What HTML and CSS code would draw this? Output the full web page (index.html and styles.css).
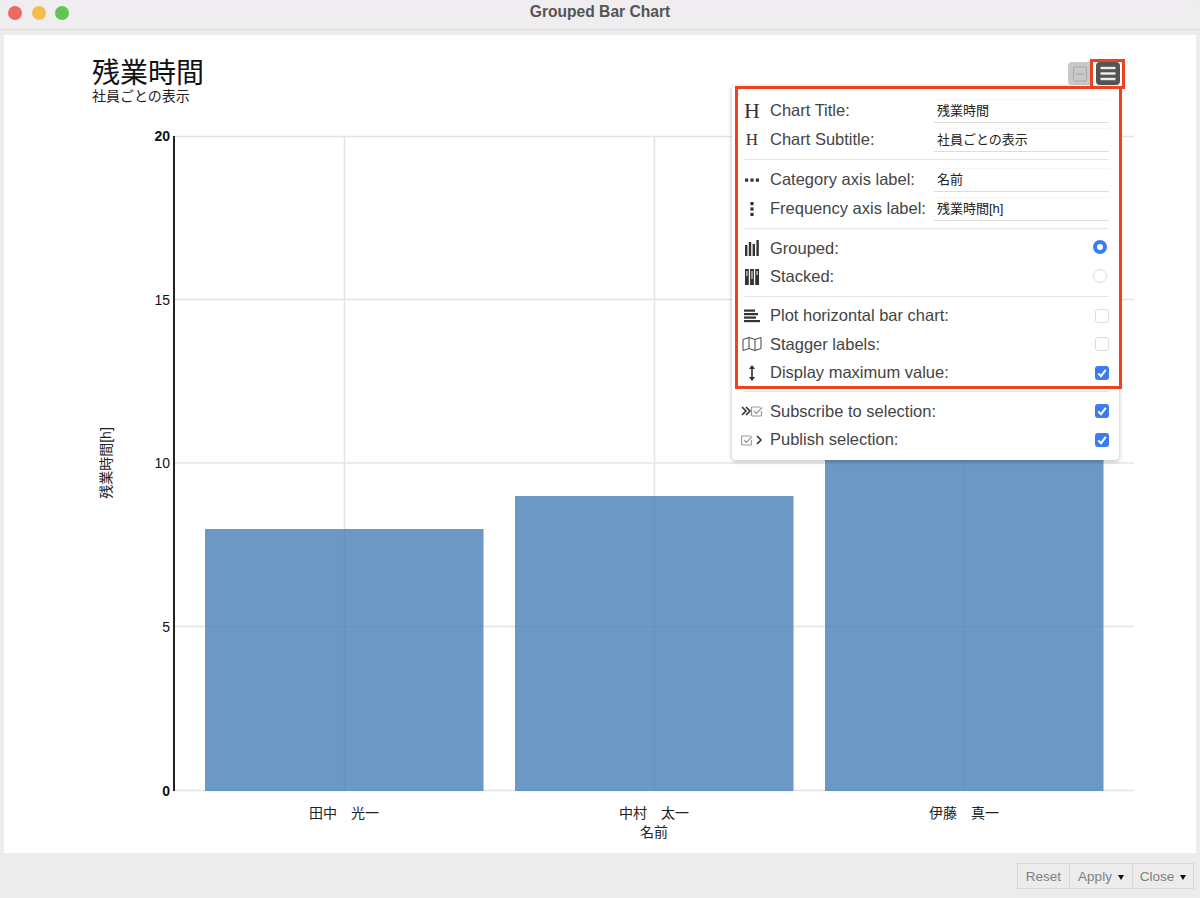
FILE: index.html
```html
<!DOCTYPE html>
<html lang="ja">
<head>
  <meta charset="UTF-8" />
  <meta name="viewport" content="width=device-width, initial-scale=1.0"/>
  <title>Grouped Bar Chart</title>
  <link rel="stylesheet" href="styles.css">
</head>
<body>
  <div class="window">
    <div class="titlebar">
      <div class="lights">
        <span class="light light-red"></span>
        <span class="light light-yellow"></span>
        <span class="light light-green"></span>
      </div>
      <span class="window-title">Grouped Bar Chart</span>
    </div>

    <div class="main">
      <div class="chart-head">
        <div class="chart-title">残業時間</div>
        <div class="chart-subtitle">社員ごとの表示</div>
      </div>

      <!-- viewBox uses page coordinates -->
      <svg class="plot" viewBox="4 105 1192 748" width="1192" height="748">
        <g class="grid">
          <line x1="174" x2="1134" y1="136.5" y2="136.5"/>
          <line x1="174" x2="1134" y1="299.5" y2="299.5"/>
          <line x1="174" x2="1134" y1="463" y2="463"/>
          <line x1="174" x2="1134" y1="626.5" y2="626.5"/>
          <line x1="174" x2="1134" y1="790.5" y2="790.5"/>
          <line x1="344.5" x2="344.5" y1="136" y2="790"/>
          <line x1="654.5" x2="654.5" y1="136" y2="790"/>
          <line x1="964.5" x2="964.5" y1="136" y2="790"/>
        </g>
        <g class="bars">
          <rect x="205" y="529" width="278.5" height="262"/>
          <rect x="515" y="496" width="278.5" height="295"/>
          <rect x="825" y="400" width="278.5" height="391"/>
        </g>
        <line class="axis" x1="174" x2="174" y1="136" y2="791"/>
        <g class="ticks">
          <text class="tick-bold" x="170" y="141">20</text>
          <text x="170" y="305">15</text>
          <text x="170" y="468">10</text>
          <text x="170" y="632">5</text>
          <text class="tick-bold" x="170" y="796">0</text>
        </g>
        <g class="cats">
          <text x="344" y="818">田中　光一</text>
          <text x="654" y="818">中村　太一</text>
          <text x="964" y="818">伊藤　真一</text>
          <text x="654" y="837">名前</text>
          <text transform="translate(111 463) rotate(-90)">残業時間[h]</text>
        </g>
      </svg>

      <button class="tool-btn tool-btn-min">
        <svg viewBox="0 0 24 24" width="24" height="24"><rect x="5.5" y="5" width="13" height="14" rx="2"/><line x1="8" x2="16" y1="12" y2="12"/></svg>
      </button>
      <button class="tool-btn tool-btn-menu">
        <svg viewBox="0 0 24 24" width="24" height="24"><line x1="4.5" x2="19.5" y1="6" y2="6"/><line x1="4.5" x2="19.5" y1="11.5" y2="11.5"/><line x1="4.5" x2="19.5" y1="17" y2="17"/></svg>
      </button>

      <div class="popover">
        <div class="row row-text">
          <span class="row-icon serif-h">H</span>
          <label>Chart Title:</label>
          <input class="text-input" value="残業時間">
        </div>
        <div class="row row-text">
          <span class="row-icon serif-h serif-h-small">H</span>
          <label>Chart Subtitle:</label>
          <input class="text-input" value="社員ごとの表示">
        </div>
        <hr>
        <div class="row row-text">
          <span class="row-icon"><svg viewBox="0 0 16 16" width="16" height="16"><rect x="1" y="6.5" width="3.2" height="3.2"/><rect x="6.4" y="6.5" width="3.2" height="3.2"/><rect x="11.8" y="6.5" width="3.2" height="3.2"/></svg></span>
          <label>Category axis label:</label>
          <input class="text-input" value="名前">
        </div>
        <div class="row row-text">
          <span class="row-icon"><svg viewBox="0 0 16 16" width="16" height="16"><rect x="6.4" y="1" width="3.2" height="3.2"/><rect x="6.4" y="6.4" width="3.2" height="3.2"/><rect x="6.4" y="11.8" width="3.2" height="3.2"/></svg></span>
          <label>Frequency axis label:</label>
          <input class="text-input" value="残業時間[h]">
        </div>
        <hr>
        <div class="row">
          <span class="row-icon"><svg viewBox="0 0 16 18" width="16" height="18"><rect x="1" y="6" width="2.4" height="11"/><rect x="4.8" y="3" width="2.4" height="14"/><rect x="8.6" y="5" width="2.4" height="12"/><rect x="12.4" y="1" width="2.4" height="16"/></svg></span>
          <label>Grouped:</label>
          <span class="radio radio-on"></span>
        </div>
        <div class="row">
          <span class="row-icon"><svg viewBox="0 0 16 18" width="16" height="18"><rect x="1" y="1" width="3.8" height="16"/><rect x="6.1" y="1" width="3.8" height="16"/><rect x="11.2" y="1" width="3.8" height="16"/><path class="stroke-white" d="M2.9 3v5M8 3v8M13.1 3v4"/></svg></span>
          <label>Stacked:</label>
          <span class="radio"></span>
        </div>
        <hr>
        <div class="row">
          <span class="row-icon"><svg viewBox="0 0 18 16" width="18" height="16"><rect x="1" y="1.5" width="11" height="2.2"/><rect x="1" y="5" width="14" height="2.2"/><rect x="1" y="8.5" width="12" height="2.2"/><rect x="1" y="12" width="16" height="2.2"/></svg></span>
          <label>Plot horizontal bar chart:</label>
          <span class="check"></span>
        </div>
        <div class="row">
          <span class="row-icon"><svg class="outline" viewBox="0 0 20 16" width="20" height="16"><path d="M1 3.5 7 1.5l6 2 6-2v11l-6 2-6-2-6 2zM7 1.5v11M13 3.5v11"/></svg></span>
          <label>Stagger labels:</label>
          <span class="check"></span>
        </div>
        <div class="row">
          <span class="row-icon"><svg viewBox="0 0 16 18" width="16" height="18"><path d="M8 1 11 5H8.8V13H11L8 17 5 13H7.2V5H5z"/></svg></span>
          <label>Display maximum value:</label>
          <span class="check check-on"><svg viewBox="0 0 14 14" width="14" height="14"><path d="M3.2 7.4 6 10.2 10.8 3.8"/></svg></span>
        </div>
        <hr class="hr-last">
        <div class="row">
          <span class="row-icon row-icon-wide"><svg viewBox="0 0 22 12" width="22" height="12"><path class="stroke-dark" d="M1 2l4 4-4 4M5 2l4 4-4 4"/><path class="stroke-grey" d="M20.5 6v4a1 1 0 0 1-1 1h-8a1 1 0 0 1-1-1V3a1 1 0 0 1 1-1h8M13 6l2.5 2.5 5.5-6"/></svg></span>
          <label>Subscribe to selection:</label>
          <span class="check check-on"><svg viewBox="0 0 14 14" width="14" height="14"><path d="M3.2 7.4 6 10.2 10.8 3.8"/></svg></span>
        </div>
        <div class="row">
          <span class="row-icon row-icon-wide"><svg viewBox="0 0 22 12" width="22" height="12"><path class="stroke-grey" d="M10.5 6v4a1 1 0 0 1-1 1h-8a1 1 0 0 1-1-1V3a1 1 0 0 1 1-1h8M3 6l2.5 2.5 5.5-6"/><path class="stroke-dark" d="M16 2l4 4-4 4"/></svg></span>
          <label>Publish selection:</label>
          <span class="check check-on"><svg viewBox="0 0 14 14" width="14" height="14"><path d="M3.2 7.4 6 10.2 10.8 3.8"/></svg></span>
        </div>
      </div>

      <!-- red annotation boxes -->
      <div class="mark mark-menu"></div>
      <div class="mark mark-options"></div>
    </div>

    <div class="footer">
      <div class="btn-group">
        <button class="foot-btn foot-btn-reset">Reset</button>
        <button class="foot-btn foot-btn-apply">Apply<span class="caret"></span></button>
        <button class="foot-btn foot-btn-close">Close<span class="caret"></span></button>
      </div>
    </div>
  </div>
</body>
</html>
```

FILE: styles.css
```css
:root {
  --cjk: 'Liberation Sans', 'Noto Sans CJK JP', sans-serif;
  --mark-red: #ee4023;
  --blue: #3b7cf2;
  --text-color: #444;
}

html, body {
  margin: 0;
  height: 100%;
  overflow: hidden;
  background: #d8d8d8;
}

body {
  font-family: var(--cjk);
}

.window {
  height: 898px;
  display: flex;
  flex-direction: column;
  background: #ececec;
}

/* Title bar */
.titlebar {
  position: relative;
  flex: none;
  height: 29px;
  display: flex;
  align-items: center;
  justify-content: center;
  background: #efedf0;
  border-bottom: 1px solid #dcdbdc;
  border-radius: 8px 8px 0 0;
}

.lights {
  position: absolute;
  left: 8px;
  top: 6px;
  display: flex;
  gap: 9.5px;
}

.light {
  width: 14px;
  height: 14px;
  border-radius: 50%;
}

.light-red { background: #ee6a5f; }
.light-yellow { background: #f5bd4f; }
.light-green { background: #61c454; }

.window-title {
  padding-bottom: 5px;
  font-size: 15.6px;
  font-weight: bold;
  color: #555;
}

/* Chart area */
.main {
  position: relative;
  flex: none;
  height: 818px;
  margin: 5px 4px 0;
  background: #fff;
}

.chart-head {
  height: 70px;
  padding-left: 88px;
  color: #111;
}

.chart-title {
  padding-top: 21px;
  font-size: 28px;
  line-height: 35px;
}

.chart-subtitle {
  margin-top: -2px;
  font-size: 14px;
  line-height: 14px;
  color: #222;
}

.plot {
  display: block;
}

.grid line {
  stroke: #e4e4e4;
  stroke-width: 1.5;
}

.bars rect {
  fill: #477eb6;
  fill-opacity: 0.8;
}

.axis {
  stroke: #222;
  stroke-width: 2;
}

.ticks text {
  font-size: 14px;
  text-anchor: end;
  fill: #111;
}

.ticks .tick-bold {
  font-weight: bold;
}

.cats text {
  font-size: 14px;
  text-anchor: middle;
  fill: #222;
}

/* Toolbar over the chart */
.tool-btn {
  position: absolute;
  top: 27px;
  width: 24px;
  height: 23px;
  padding: 0;
  border: none;
  border-radius: 4px;
  display: flex;
  align-items: center;
  justify-content: center;
}

.tool-btn-min {
  left: 1064px;
  background: #c9c9c9;
}

.tool-btn-min rect,
.tool-btn-min line {
  fill: none;
  stroke: #aaa;
  stroke-width: 1.2;
}

.tool-btn-menu {
  left: 1092px;
  background: #555;
}

.tool-btn-menu line {
  stroke: #eee;
  stroke-width: 2.4;
}

/* Settings panel */
.popover {
  position: absolute;
  left: 728px;
  top: 51px;
  width: 387px;
  height: 374px;
  box-sizing: border-box;
  padding: 10px 10px 0 8px;
  background: #fff;
  border-radius: 0 0 4px 4px;
  box-shadow: 0 1px 4px rgba(0,0,0,0.3);
  font-size: 16.5px;
  color: var(--text-color);
}

.row {
  display: flex;
  align-items: center;
  height: 28.4px;
}

.row-text {
  height: 29px;
}

.row label {
  flex: 1;
  white-space: nowrap;
}

.row-icon {
  flex: none;
  width: 30px;
  padding-right: 6px;
  box-sizing: border-box;
  display: flex;
  align-items: center;
  justify-content: center;
  color: #333;
}

.row-icon svg {
  fill: #333;
}

.row-icon-wide {
  padding-right: 6px;
}

.serif-h {
  font-family: 'Liberation Serif', serif;
  font-size: 22px;
}

.serif-h-small {
  font-size: 17px;
}

.outline path {
  fill: none;
  stroke: #444;
  stroke-width: 1;
}

.row-icon .stroke-white {
  fill: none;
  stroke: #fff;
  stroke-width: 1;
}

.row-icon .stroke-dark {
  fill: none;
  stroke: #333;
  stroke-width: 1.6;
}

.row-icon .stroke-grey {
  fill: none;
  stroke: #999;
  stroke-width: 1.2;
}

hr {
  height: 1px;
  margin: 5px 0 5px 4px;
  border: none;
  background: #e6e6e6;
}

hr.hr-last {
  margin: 4px 0 5px 4px;
}

.text-input {
  width: 175px;
  height: 24px;
  box-sizing: border-box;
  padding: 0 3px 2px;
  border: none;
  border-top: 1px solid #f6f6f6;
  border-bottom: 1px solid #ddd;
  outline: none;
  background: #fff;
  font-family: var(--cjk);
  font-size: 13px;
  color: #222;
}

.radio {
  width: 14px;
  height: 14px;
  margin: -2px 2px 0 0;
  box-sizing: border-box;
  border: 1.5px solid #ddd;
  border-radius: 50%;
}

.radio-on {
  border: 4px solid var(--blue);
}

.check {
  width: 14px;
  height: 14px;
  box-sizing: border-box;
  border: 1.5px solid #ddd;
  border-radius: 3px;
}

.check-on {
  border: none;
  background: var(--blue);
}

.check svg {
  display: block;
}

.check path {
  fill: none;
  stroke: #fff;
  stroke-width: 2;
}

/* Red annotation boxes */
.mark {
  position: absolute;
  box-sizing: border-box;
  border: 3px solid var(--mark-red);
  pointer-events: none;
}

.mark-menu {
  left: 1086px;
  top: 24px;
  width: 35px;
  height: 30px;
}

.mark-options {
  left: 731px;
  top: 51px;
  width: 387px;
  height: 303px;
}

/* Footer buttons */
.footer {
  flex: 1;
  display: flex;
  justify-content: flex-end;
  align-items: flex-start;
  padding: 10px 6px 0 0;
}

.btn-group {
  display: flex;
  height: 26px;
  border: 1px solid #d8d8d8;
  box-sizing: border-box;
}

.foot-btn {
  padding: 0;
  border: none;
  border-left: 1px solid #d8d8d8;
  background: #ececec;
  font-family: var(--cjk);
  font-size: 13.5px;
  color: #808080;
}

.foot-btn:first-child {
  border-left: none;
}

.foot-btn-reset { width: 51px; }
.foot-btn-apply { width: 63px; }
.foot-btn-close { width: 61px; }

.caret {
  display: inline-block;
  margin-left: 6px;
  vertical-align: 1px;
  border-left: 3.5px solid transparent;
  border-right: 3.5px solid transparent;
  border-top: 5px solid #111;
}
```
